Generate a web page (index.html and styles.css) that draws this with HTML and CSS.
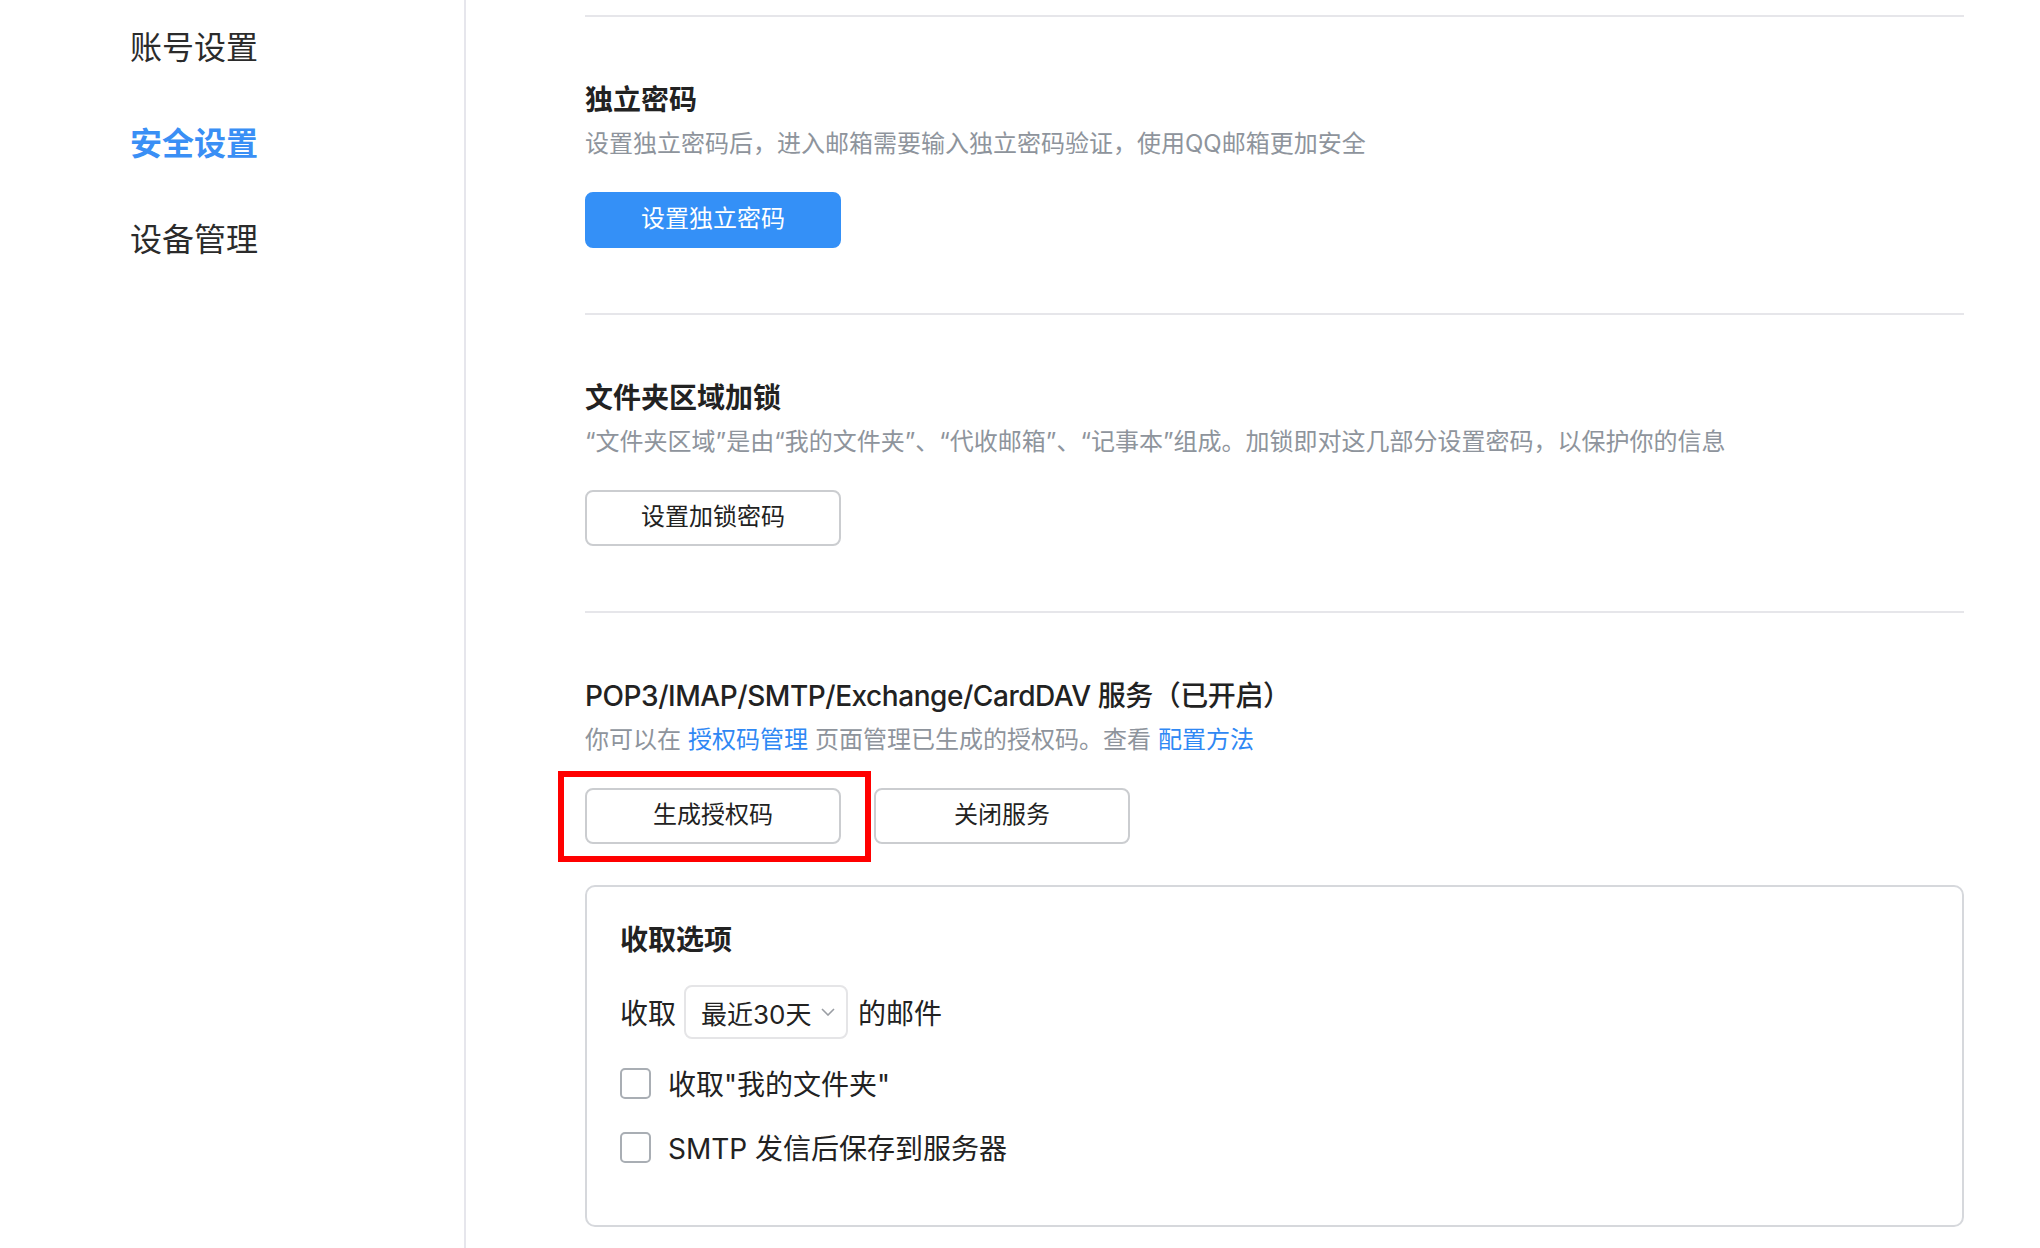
FILE: index.html
```html
<!DOCTYPE html>
<html lang="zh-CN">
<head>
<meta charset="utf-8">
<title>安全设置</title>
<link rel="stylesheet" href="styles.css">
</head>
<body>
<div class="page">
  <nav class="sidebar">
    <div class="nav-item">账号设置</div>
    <div class="nav-item active">安全设置</div>
    <div class="nav-item">设备管理</div>
  </nav>
  <main class="main">
    <section class="section">
      <h2 class="sec-title">独立密码</h2>
      <p class="sec-desc">设置独立密码后，进入邮箱需要输入独立密码验证，使用QQ邮箱更加安全</p>
      <div class="actions">
        <button class="btn btn-primary">设置独立密码</button>
      </div>
    </section>
    <section class="section">
      <h2 class="sec-title">文件夹区域加锁</h2>
      <p class="sec-desc">“文件夹区域”是由“我的文件夹”、“代收邮箱”、“记事本”组成。加锁即对这几部分设置密码，以保护你的信息</p>
      <div class="actions">
        <button class="btn">设置加锁密码</button>
      </div>
    </section>
    <section class="section last">
      <h2 class="sec-title medium">POP3/IMAP/SMTP/Exchange/CardDAV 服务（已开启）</h2>
      <p class="sec-desc">你可以在<a class="link">授权码管理</a>页面管理已生成的授权码。查看<a class="link">配置方法</a></p>
      <div class="actions">
        <button class="btn">生成授权码</button>
        <button class="btn">关闭服务</button>
        <div class="highlight"></div>
      </div>
      <div class="card">
        <h3 class="card-title">收取选项</h3>
        <div class="row">
          <span>收取</span>
          <div class="select">
            <span>最近30天</span>
            <svg class="chev" width="14" height="8" viewBox="0 0 14 8"><path d="M1 1 L7 7 L13 1" fill="none" stroke="#9a9ea4" stroke-width="1.6"/></svg>
          </div>
          <span>的邮件</span>
        </div>
        <label class="check"><span class="box"></span><span>收取"我的文件夹"</span></label>
        <label class="check"><span class="box"></span><span>SMTP 发信后保存到服务器</span></label>
      </div>
    </section>
  </main>
</div>
</body>
</html>
```

FILE: styles.css
```css
* { box-sizing: border-box; }
html, body { margin: 0; padding: 0; background: #fff; }
body {
  font-family: Inter, "Noto Sans CJK SC", sans-serif;
  color: #222;
  width: 2040px;
  height: 1248px;
  overflow: hidden;
}
.page {
  display: flex;
  height: 1248px;
}
.sidebar {
  width: 466px;
  flex: none;
  border-right: 2px solid #e6e6ec;
  padding: 24px 0 0 130px;
  display: flex;
  flex-direction: column;
  gap: 48px;
}
.nav-item {
  font-size: 32px;
  line-height: 48px;
  color: #2b2b2b;
}
.nav-item.active {
  color: #3a8ff5;
  font-weight: 700;
}
.main {
  flex: 1;
  padding: 15px 76px 0 119px;
}
.section {
  border-top: 2px solid #e6e6ea;
  padding: 63px 0 65px;
}
.section.last { padding-bottom: 0; }
.sec-title {
  margin: 0;
  font-size: 28px;
  line-height: 40px;
  font-weight: 700;
  color: #222;
}
.sec-title.medium {
  font-weight: 500;
  letter-spacing: -0.45px;
}
.sec-desc {
  margin: 8px 0 0;
  font-size: 24px;
  line-height: 32px;
  color: #8e949c;
}
.link {
  color: #2f88f4;
  margin: 0 7px;
}
.actions {
  position: relative;
  display: flex;
  gap: 33px;
  margin-top: 32px;
}
.btn {
  width: 256px;
  height: 56px;
  border: 2px solid #cbcdd0;
  border-radius: 8px;
  background: #fff;
  font-family: inherit;
  font-size: 24px;
  line-height: 32px;
  color: #222;
  padding: 0 0 2px;
}
.btn-primary {
  background: #3490f7;
  border-color: #3490f7;
  color: #fff;
}
.highlight {
  position: absolute;
  left: -27px;
  top: -17px;
  width: 313px;
  height: 91px;
  border: 6px solid #ff0000;
  pointer-events: none;
}
.card {
  margin-top: 41px;
  height: 342px;
  border: 2px solid #d6d8dc;
  border-radius: 10px;
  padding: 33px 33px 0;
}
.card-title {
  margin: 0;
  font-size: 28px;
  line-height: 40px;
  font-weight: 700;
}
.row {
  margin-top: 25px;
  display: flex;
  align-items: center;
  font-size: 28px;
  color: #222;
}
.select {
  margin: 0 10px 0 8px;
  width: 164px;
  height: 54px;
  border: 2px solid #e5e5e7;
  border-radius: 8px;
  display: flex;
  align-items: center;
  padding-left: 15px;
  font-size: 26px;
}
.chev { margin-left: 10px; }
.check {
  display: flex;
  align-items: center;
  gap: 17px;
  height: 40px;
  font-size: 28px;
  color: #222;
}
.row + .check { margin-top: 24px; }
.check + .check { margin-top: 24px; }
.box {
  width: 31px;
  height: 31px;
  border: 2px solid #a9aeb4;
  border-radius: 5px;
  flex: none;
}
```
